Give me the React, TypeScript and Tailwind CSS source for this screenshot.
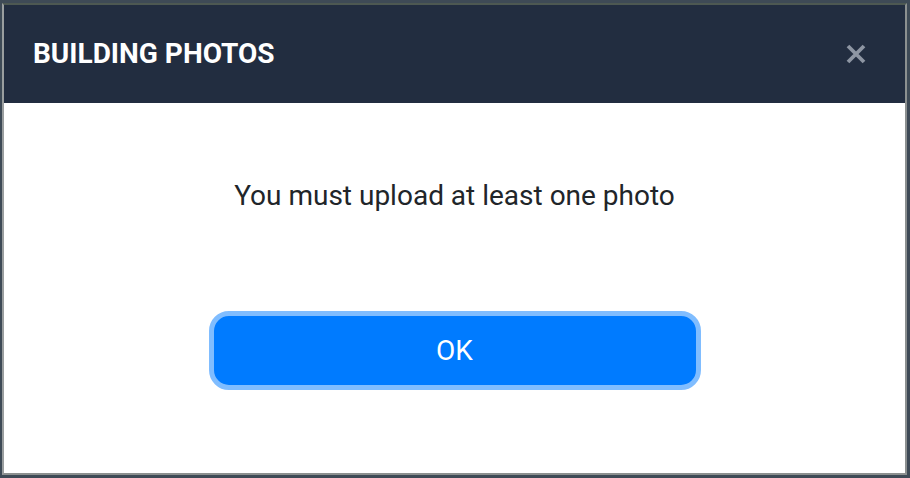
export default function App() {
  return (
    <div className="w-[910px] h-[478px] bg-[#3e4a56] pt-[3px] pl-[2px] pr-[3px] pb-[3px] font-['Roboto',sans-serif]">
      <div className="flex h-full flex-col border-2 border-t-[#4d5852] border-l-[#9a9e9f] border-r-[#8c9090] border-b-[#8c9090] bg-white">
        <div className="flex h-[98px] items-center justify-between bg-[#222d40] pl-[29px] pr-[37px]">
          <h1 className="text-[28px] font-bold text-white">BUILDING PHOTOS</h1>
          <button className="flex h-6 w-6 items-center justify-center text-[#8e96a3]">
            <svg width="22" height="22" viewBox="0 0 22 22">
              <path d="M3 3 L19 19 M19 3 L3 19" stroke="currentColor" strokeWidth="3.8" />
            </svg>
          </button>
        </div>
        <div className="flex flex-1 flex-col items-center">
          <p className="mt-[72px] text-[28px] leading-[42px] text-[#212529]">You must upload at least one photo</p>
          <button className="mt-[94px] h-[79px] w-[492px] rounded-[20px] border-[5px] border-[#80bdff] bg-[#007bff] text-[28px] text-white">
            OK
          </button>
        </div>
      </div>
    </div>
  );
}
